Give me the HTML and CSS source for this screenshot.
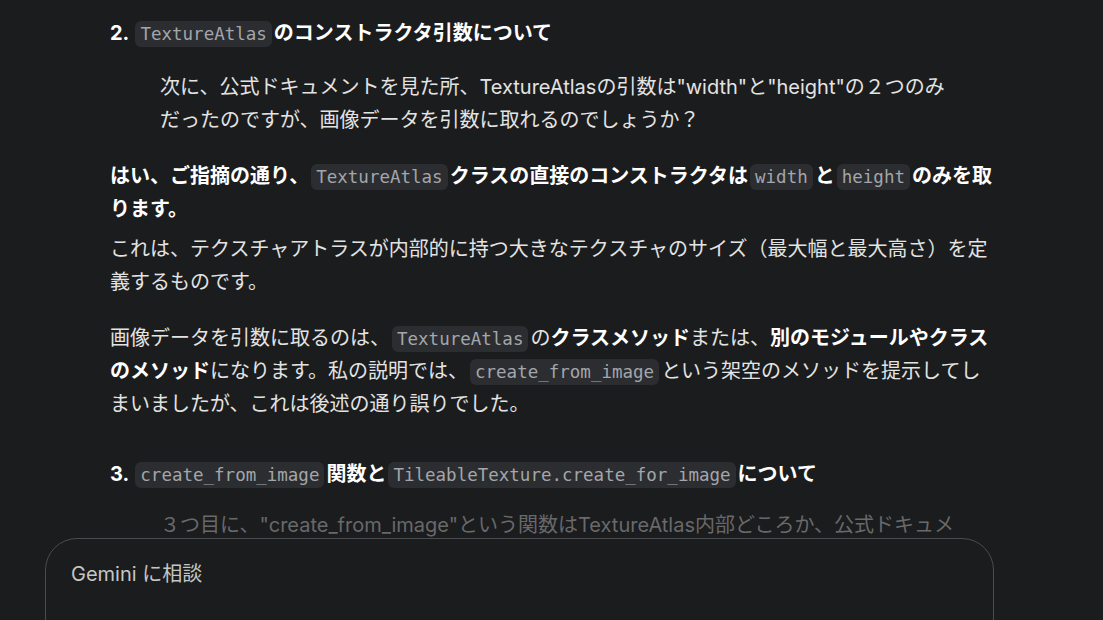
FILE: index.html
```html
<!DOCTYPE html>
<html lang="ja">
<head>
    <meta charset="UTF-8">
    <meta name="viewport" content="width=device-width, initial-scale=1.0">
    <title>Gemini</title>
    <link rel="stylesheet" href="styles.css">
</head>
<body>
    <!-- Response -->
    <main class="response">
        <h3 class="point"><span class="num">2.</span> <code>TextureAtlas</code>のコンストラクタ引数について</h3>

        <blockquote class="quote">
            <p>次に、公式ドキュメントを見た所、TextureAtlasの引数は"width"と"height"の２つのみだったのですが、画像データを引数に取れるのでしょうか？</p>
        </blockquote>

        <p class="answer"><b>はい、ご指摘の通り、<code>TextureAtlas</code>クラスの直接のコンストラクタは<code>width</code>と<code>height</code>のみを取ります。</b></p>
        <p class="answer tight">これは、テクスチャアトラスが内部的に持つ大きなテクスチャのサイズ（最大幅と最大高さ）を定義するものです。</p>

        <p class="answer spaced">画像データを引数に取るのは、<code>TextureAtlas</code>の<b>クラスメソッド</b>または、<b>別のモジュールやクラスのメソッド</b>になります。私の説明では、<code>create_from_image</code>という架空のメソッドを提示してしまいましたが、これは後述の通り誤りでした。</p>

        <h3 class="point gap"><span class="num">3.</span> <code>create_from_image</code>関数と<code>TileableTexture.create_for_image</code>について</h3>

        <blockquote class="quote faded">
            <p>３つ目に、"create_from_image"という関数はTextureAtlas内部どころか、公式ドキュメ</p>
        </blockquote>
    </main>

    <!-- Composer -->
    <div class="composer">
        <div class="composer-input">Gemini に相談</div>
    </div>
</body>
</html>
```

FILE: styles.css
```css
/* Global */
body {
    margin: 0;
    background: #1b1c1d;
    color: #e3e3e3;
    font-family: 'Inter', 'Noto Sans CJK JP', sans-serif;
    font-size: 20px;
    line-height: 33px;
    overflow: hidden;
    height: 620px;
}

/* Response */
.response {
    width: 885px;
    padding: 17px 0 0 110px;
}

.response p {
    margin: 0;
}

.point {
    margin: 0;
    font-size: 20px;
    font-weight: 700;
    color: #ffffff;
}

.point.gap {
    margin-top: 37px;
}

.quote {
    margin: 21px 0 0 50px;
    width: 785px;
}

.quote.faded {
    margin-top: 18px;
    color: #68696b;
    white-space: nowrap;
}

.response .answer {
    margin-top: 23px;
}

.answer b {
    color: #ffffff;
}

.response .answer.tight {
    margin-top: 7px;
}

.response .answer.spaced {
    margin-top: 23px;
}

code {
    font-family: 'DejaVu Sans Mono', monospace;
    font-size: 17.5px;
    line-height: 1;
    font-weight: 400;
    color: #a3a6ab;
    background: #2c2d30;
    border-radius: 6px;
    padding: 3px 5px;
    margin: 0 2px;
}

/* Composer */
.composer {
    position: fixed;
    left: 45px;
    top: 538px;
    width: 947px;
    height: 140px;
    border: 1px solid #4b4c4f;
    border-radius: 32px;
    background: #1b1c1d;
}

.composer-input {
    padding: 19px 0 0 25px;
    color: #c4c7c5;
    font-size: 20px;
}
```
